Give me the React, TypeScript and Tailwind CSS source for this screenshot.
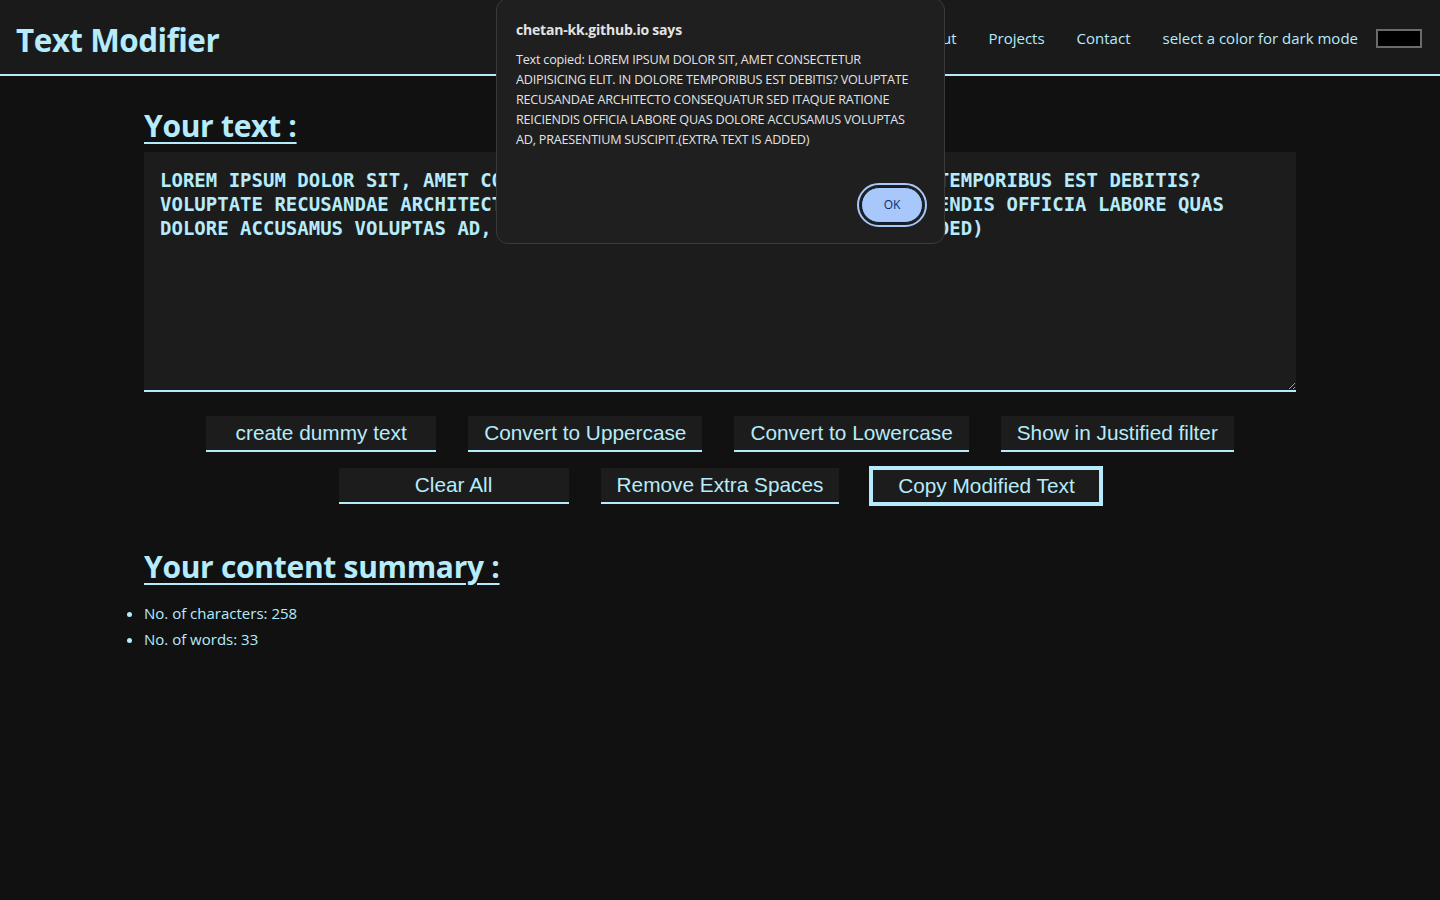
import React from "react";

const TEXT =
  "LOREM IPSUM DOLOR SIT, AMET CONSECTETUR ADIPISICING ELIT. IN DOLORE TEMPORIBUS EST DEBITIS? VOLUPTATE RECUSANDAE ARCHITECTO CONSEQUATUR SED ITAQUE RATIONE REICIENDIS OFFICIA LABORE QUAS DOLORE ACCUSAMUS VOLUPTAS AD, PRAESENTIUM SUSCIPIT.(EXTRA TEXT IS ADDED)";

const Btn = ({ label, focused }: { label: string; focused?: boolean }) => (
  <button
    className={
      "h-[36px] min-w-[230px] px-4 bg-[#1c1c1c] text-[#b6ebfb] text-[20.8px] leading-none border-b-2 border-[#b6ebfb] font-['Liberation_Sans',Arial,sans-serif] " +
      (focused ? "outline-2 outline-[#b6ebfb] outline-offset-0 border-2" : "")
    }
  >
    {label}
  </button>
);

export default function App() {
  return (
    <div className="relative min-h-[900px] bg-[#111111] text-[#b6ebfb] font-['Open_Sans','Noto_Sans',sans-serif] overflow-hidden">
      <nav className="h-[76px] bg-[#1a1a1a] border-b-2 border-[#b6ebfb] flex items-center justify-between pl-4 pr-[18px]">
        <h1 className="text-[31.4px] font-bold tracking-[-0.5px] leading-none mt-[6px]">Text Modifier</h1>
        <div className="flex items-center gap-8 text-[15px] mt-[2px]">
          <span>Home</span>
          <span>About</span>
          <span>Projects</span>
          <span>Contact</span>
          <div className="flex items-center gap-[18px]">
            <span>select a color for dark mode</span>
            <div className="w-[46px] h-[19px] bg-black border-2 border-[#6b6b6b]" />
          </div>
        </div>
      </nav>

      <main className="w-[1152px] mx-auto">
        <h2 className="mt-[30px] text-[30px] font-bold underline underline-offset-[5px] decoration-[2px] leading-[40px] tracking-[-0.3px]">
          Your text :
        </h2>
        <textarea
          readOnly
          value={TEXT}
          rows={8}
          className="mt-[6px] block w-full h-[240px] bg-[#1c1c1c] text-[#b6ebfb] border-b-2 border-[#b6ebfb] px-4 py-4 text-[19px] leading-[24px] font-bold font-['DejaVu_Sans_Mono',monospace] resize-y outline-none"
        />
        <div className="mt-[24px] flex flex-wrap justify-center gap-x-8 gap-y-4">
          <Btn label="create dummy text" />
          <Btn label="Convert to Uppercase" />
          <Btn label="Convert to Lowercase" />
          <Btn label="Show in Justified filter" />
          <Btn label="Clear All" />
          <Btn label="Remove Extra Spaces" />
          <Btn label="Copy Modified Text" focused />
        </div>
        <h2 className="mt-[43px] text-[30px] font-bold underline underline-offset-[5px] decoration-[2px] leading-[40px] tracking-[-0.3px]">
          Your content summary :
        </h2>
        <ul className="mt-[13px] list-disc pl-0 ml-0 text-[15px] leading-[26px] marker:text-[#b6ebfb]">
          <li>No. of characters: 258</li>
          <li>No. of words: 33</li>
        </ul>
      </main>

      <div className="absolute left-[496px] top-[-2px] w-[449px] h-[246px] bg-[#1f1f1f] border border-[#3a3a3a] rounded-xl pl-[19px] pr-5 pt-[21px] text-[#e3e3e3] font-['Open_Sans','Noto_Sans',sans-serif]">
        <div className="text-[14px] font-bold leading-[20px] tracking-[-0.2px]">chetan-kk.github.io says</div>
        <p className="mt-[10px] text-[12.6px] leading-[20px] tracking-[-0.2px]">
          Text copied: {TEXT}
        </p>
        <div className="flex justify-end mt-[33px] -mr-[3px]">
          <div className="rounded-full border-2 border-[#a8c7fa] p-[2px]">
            <div className="w-[62px] h-[36px] rounded-full bg-[#a8c7fa] border border-[#0b1a2e] text-[#062e6f] text-[12px] font-medium flex items-center justify-center">
              OK
            </div>
          </div>
        </div>
      </div>
    </div>
  );
}
